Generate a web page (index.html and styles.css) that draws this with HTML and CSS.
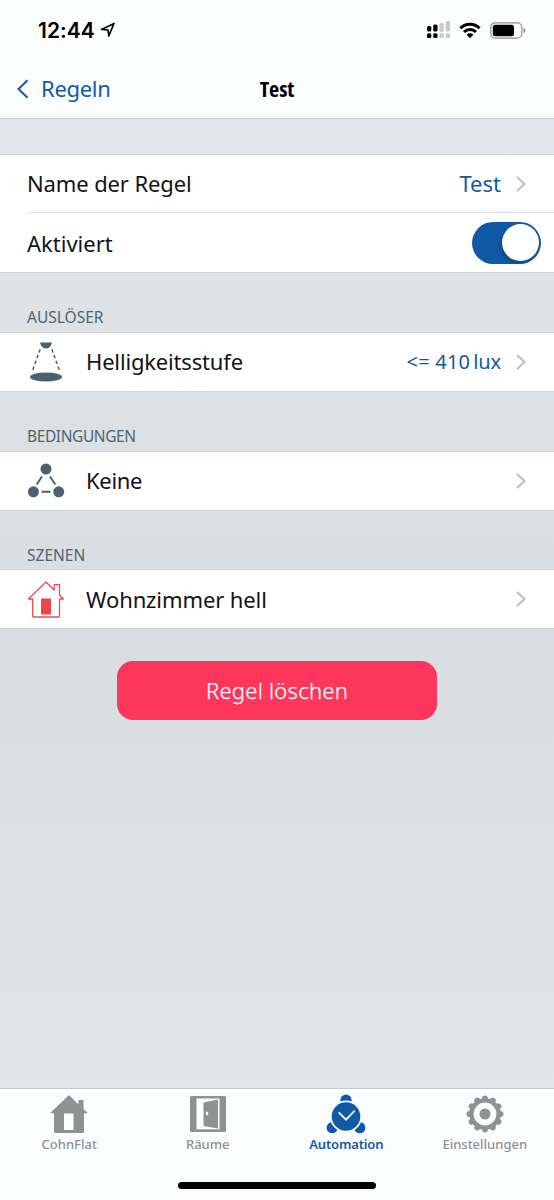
FILE: index.html
```html
<!DOCTYPE html>
<html lang="de">
<head>
<meta charset="utf-8">
<title>Test</title>
<link rel="stylesheet" href="styles.css">
</head>
<body>
<div class="screen">
  <header class="header">
    <div class="status">
      <div class="status-left">
        <span class="clock">12:44</span>
        <svg class="location" width="16" height="16" viewBox="0 0 16 16"><path d="M1.600 7.400 14 1.400 8.800 14 8 8z" fill="none" stroke="#000" stroke-width="1.700" stroke-linejoin="round"/></svg>
      </div>
      <div class="status-right">
        <svg width="24" height="18" viewBox="0 0 24 18">
          <g fill="#000"><rect x="1" y="5" width="4.300" height="5.500" rx="1.500"/><rect x="7.200" y="3.500" width="4.300" height="7" rx="1.500"/><rect x="1" y="12.300" width="4.300" height="4.800" rx="1.500"/><rect x="7.200" y="12.300" width="4.300" height="4.800" rx="1.500"/></g>
          <g fill="#c8c8ca"><rect x="13.500" y="2" width="4.300" height="8.700" rx="1.500"/><rect x="19.700" y="0" width="4.300" height="10.500" rx="1.500"/><rect x="13.500" y="12.300" width="4.300" height="4.800" rx="1.500"/><rect x="19.700" y="12.300" width="4.300" height="4.800" rx="1.500"/></g>
        </svg>
        <svg width="22" height="17" viewBox="0 0 22 17"><g fill="none" stroke="#000" stroke-width="3"><path d="M1.400 6.200a13.600 13.600 0 0 1 19.200 0"/><path d="M5 10a8.500 8.500 0 0 1 12 0"/></g><path d="M7.600 12.700a4.800 4.800 0 0 1 6.800 0L11 16.200z"/></svg>
        <svg width="36" height="17" viewBox="0 0 36 17"><rect x=".8" y=".8" width="31" height="15.400" rx="4.500" fill="#fff" stroke="#8e8e90" stroke-width="1.200"/><rect x="2.800" y="2.700" width="21.200" height="11.600" rx="2.500"/><path d="M33.500 5.800q2 .8 2 2.700t-2 2.700z" fill="#8e8e90"/></svg>
      </div>
    </div>
    <div class="nav">
      <a class="back"><svg width="12" height="20" viewBox="0 0 12 20"><path d="M10.500 1.200 1.500 10l9 8.800" fill="none" stroke="#105aa5" stroke-width="2"/></svg><span>Regeln</span></a>
      <h1 class="title">Test</h1>
    </div>
  </header>

  <main class="content">
    <section class="group">
      <div class="row"><span class="label name">Name der Regel</span><span class="value test">Test</span><svg class="chevron" viewBox="0 0 12 18"><path d="m2 2 7.500 7L2 16"/></svg></div>
      <div class="divider"></div>
      <div class="row switch-row"><span class="label active">Aktiviert</span><span class="switch"><i></i></span></div>
    </section>
    <h2 class="heading">AUSLÖSER</h2>
    <section class="group">
      <div class="row">
        <svg class="icon" viewBox="0 0 38 42"><g fill="#4d606d"><path d="M13 1.500h12q-1.500 6-6 6t-6-6z"/><ellipse cx="19" cy="36" rx="16" ry="4.600"/></g><path d="M13.200 8.300 5 31M24.800 8.300 33 31" fill="none" stroke="#4d606d" stroke-width="1.500" stroke-dasharray="3.500 2.600"/></svg>
        <span class="label bright">Helligkeitsstufe</span><span class="value lux">&lt;= 410<span class="unit">lux</span></span><svg class="chevron" viewBox="0 0 12 18"><path d="m2 2 7.500 7L2 16"/></svg>
      </div>
    </section>
    <h2 class="heading conditions">BEDINGUNGEN</h2>
    <section class="group">
      <div class="row">
        <svg class="icon" viewBox="0 0 38 42"><g fill="#4d606d"><circle cx="19" cy="9" r="5.500"/><circle cx="6.400" cy="31.800" r="5.500"/><circle cx="31.700" cy="31.800" r="5.500"/></g><path d="M15 16.500 9.700 24.500M23 16.500l5.300 8M14.500 31.800h9" fill="none" stroke="#4d606d" stroke-width="2"/></svg>
        <span class="label none">Keine</span><svg class="chevron" viewBox="0 0 12 18"><path d="m2 2 7.500 7L2 16"/></svg>
      </div>
    </section>
    <h2 class="heading">SZENEN</h2>
    <section class="group">
      <div class="row">
        <svg class="icon" viewBox="0 0 38 42"><path d="M19 4 1.500 21H5.700V38q0 1 1 1H31.500q1 0 1-1V21h3.900L32.500 17.200V6.700h-5.300V12z" fill="none" stroke="#ef4a50" stroke-width="1.300" stroke-linejoin="round"/><path d="M14 20.500h10v16H14z" fill="#ef454b"/></svg>
        <span class="label scene">Wohnzimmer hell</span><svg class="chevron" viewBox="0 0 12 18"><path d="m2 2 7.500 7L2 16"/></svg>
      </div>
    </section>
    <button class="delete"><span>Regel löschen</span></button>
  </main>

  <nav class="tabs">
    <a class="tab"><svg width="40" height="40" viewBox="0 0 40 40"><path fill="#8c9391" fill-rule="evenodd" d="M20 1 1 19.200h4V37.500q0 1.500 1.500 1.500h27q1.500 0 1.500-1.500V19.200h4L34.500 15V6h-5v4.500zM15 19.500h9.500v16.500H15z"/></svg><span>CohnFlat</span></a>
    <a class="tab"><svg width="40" height="40" viewBox="0 0 40 40"><rect x="2" y="2" width="36" height="36" rx="1.500" fill="#8c9391"/><path d="M8.500 4.500h23v30.800h-23z" fill="#fff"/><path d="M15.500 8.500 30 5.500v29L15.500 32z" fill="#8c9391"/><ellipse cx="19" cy="19.500" rx="1.200" ry="2" fill="#fff"/></svg><span class="rooms">Räume</span></a>
    <a class="tab selected"><svg width="40" height="40" viewBox="0 0 40 40"><g fill="#105aa5"><circle cx="20" cy="6.200" r="5.600"/><circle cx="6.200" cy="33.700" r="5.600"/><circle cx="33.800" cy="33.700" r="5.600"/></g><circle cx="20" cy="22.500" r="16" fill="#fbfdfe"/><circle cx="20" cy="22.500" r="14.300" fill="#105aa5"/><path d="m12.700 18.300 7.300 7.400 8.700-9" fill="none" stroke="#fff" stroke-width="1.700"/></svg><span class="automation">Automation</span></a>
    <a class="tab"><svg width="40" height="40" viewBox="0 0 40 40"><g fill="#8c9391"><circle cx="20" cy="20" r="15.800"/><path d="M20 4.400v31.200M4.400 20h31.200M12.200 6.500l15.600 27M6.500 12.200l27 15.600M6.500 27.800l27-15.600M12.200 33.500l15.600-27" stroke="#8c9391" stroke-width="5.800" stroke-linecap="round"/></g><circle cx="20" cy="20" r="11.400" fill="#fbfdfe"/><circle cx="20" cy="20" r="5.500" fill="#8c9391"/></svg><span>Einstellungen</span></a>
    <div class="home"></div>
  </nav>
</div>
</body>
</html>
```
FILE: styles.css
```css
* { box-sizing: border-box; }
body { margin: 0; font-family: "Noto Sans", sans-serif; }
.screen { width: 554px; height: 1200px; display: flex; flex-direction: column; background: linear-gradient(#e0e6e9 118px, #d7dde0 640px, #dfe5e8 1088px); color: #101316; overflow: hidden; }
.header { height: 119px; flex: none; background: #fcfdfe; border-bottom: 1px solid #c7d1d2; }
.status { height: 60px; display: flex; justify-content: space-between; padding: 0 28px 0 38px; align-items: center; }
.status-left { display: flex; align-items: center; gap: 5px; }
.clock { font: 600 21px/26px Inter, sans-serif; color: #000; letter-spacing: .05px; padding-top: 2px; }
.status-right { display: flex; align-items: center; gap: 9px; }
.nav { height: 58px; display: grid; grid-template-columns: 1fr auto 1fr; align-items: center; padding-left: 17px; }
.back { display: flex; align-items: center; gap: 12px; color: #105aa5; font-size: 22px; letter-spacing: -.3px; }
.back span { padding-bottom: 2px; }
.title { margin: 0; font-size: 22px; font-family: "Open Sans", sans-serif; font-stretch: 75%; font-weight: 700; color: #000; padding: 0 17px 3px 0; }
.content { flex: 1; padding-top: 35px; display: flex; flex-direction: column; }
.group { background: #fff; border: solid #ced5d7; border-width: 1px 0; flex: none; }
.row { height: 58px; display: flex; align-items: center; padding: 0 27px; }
.group:first-child .row:first-child { height: 57px; }
.group:first-child .switch-row { height: 59px; }
.divider { height: 1px; margin-left: 27px; background: #dfe1e2; }
.label { font-size: 22px; white-space: nowrap; padding-bottom: 2px; }
.name { letter-spacing: -.12px; }
.active { padding-bottom: 0; }
.bright { letter-spacing: -.17px; }
.none { letter-spacing: -.3px; }
.scene { letter-spacing: -.1px; padding-bottom: 0; }
.value { margin-left: auto; margin-right: 14px; color: #105aa5; font-size: 22px; white-space: nowrap; padding-bottom: 1px; }
.lux { font-size: 20px; letter-spacing: .2px; padding-bottom: 2px; }
.unit { margin-left: 3px; letter-spacing: -.1px; }
.chevron { width: 12px; height: 18px; flex: none; fill: none; stroke: #bfc0c1; stroke-width: 2.2; }
.label + .chevron { margin-left: auto; }
.icon { width: 38px; height: 42px; margin-right: 21px; flex: none; }
.switch-row { padding-right: 13px; }
.switch { margin-left: auto; width: 69px; height: 42px; border-radius: 21px; background: #105aa5; display: flex; justify-content: flex-end; padding: 2.5px; }
.switch i { width: 37px; height: 37px; border-radius: 50%; background: #fff; box-shadow: -2px 2px 4px #0003; }
.heading { margin: 0; height: 59px; padding: 30px 27px 0; font-size: 15.5px; line-height: 29px; font-weight: 400; color: #526471; }
.conditions { letter-spacing: -.4px; }
.group:nth-of-type(4) { margin-top: -1px; }
.delete { margin: 32px auto 0; width: 320px; height: 59px; border: 0; border-radius: 16px; background: #fc365d; color: #fff; font: 300 22px "Noto Sans", sans-serif; -webkit-text-stroke: .25px #fff; letter-spacing: .25px; padding: 0 0 1px; }
.tabs { height: 112px; flex: none; border-top: 1px solid #c2cccf; background: #fbfdfe; display: grid; grid-template-columns: repeat(4, 138.5px); grid-template-rows: 93px 7px; }
.tab { display: flex; flex-direction: column; align-items: center; padding-top: 5px; color: #8c9391; font-size: 13px; line-height: 20px; font-weight: 500; }
.tab svg { flex: none; }
.selected { color: #105aa5; font-weight: 600; }
.automation { letter-spacing: -.15px; }
.home { grid-column: 1 / -1; justify-self: center; width: 198px; height: 7px; border-radius: 4px; background: #000; }
```
